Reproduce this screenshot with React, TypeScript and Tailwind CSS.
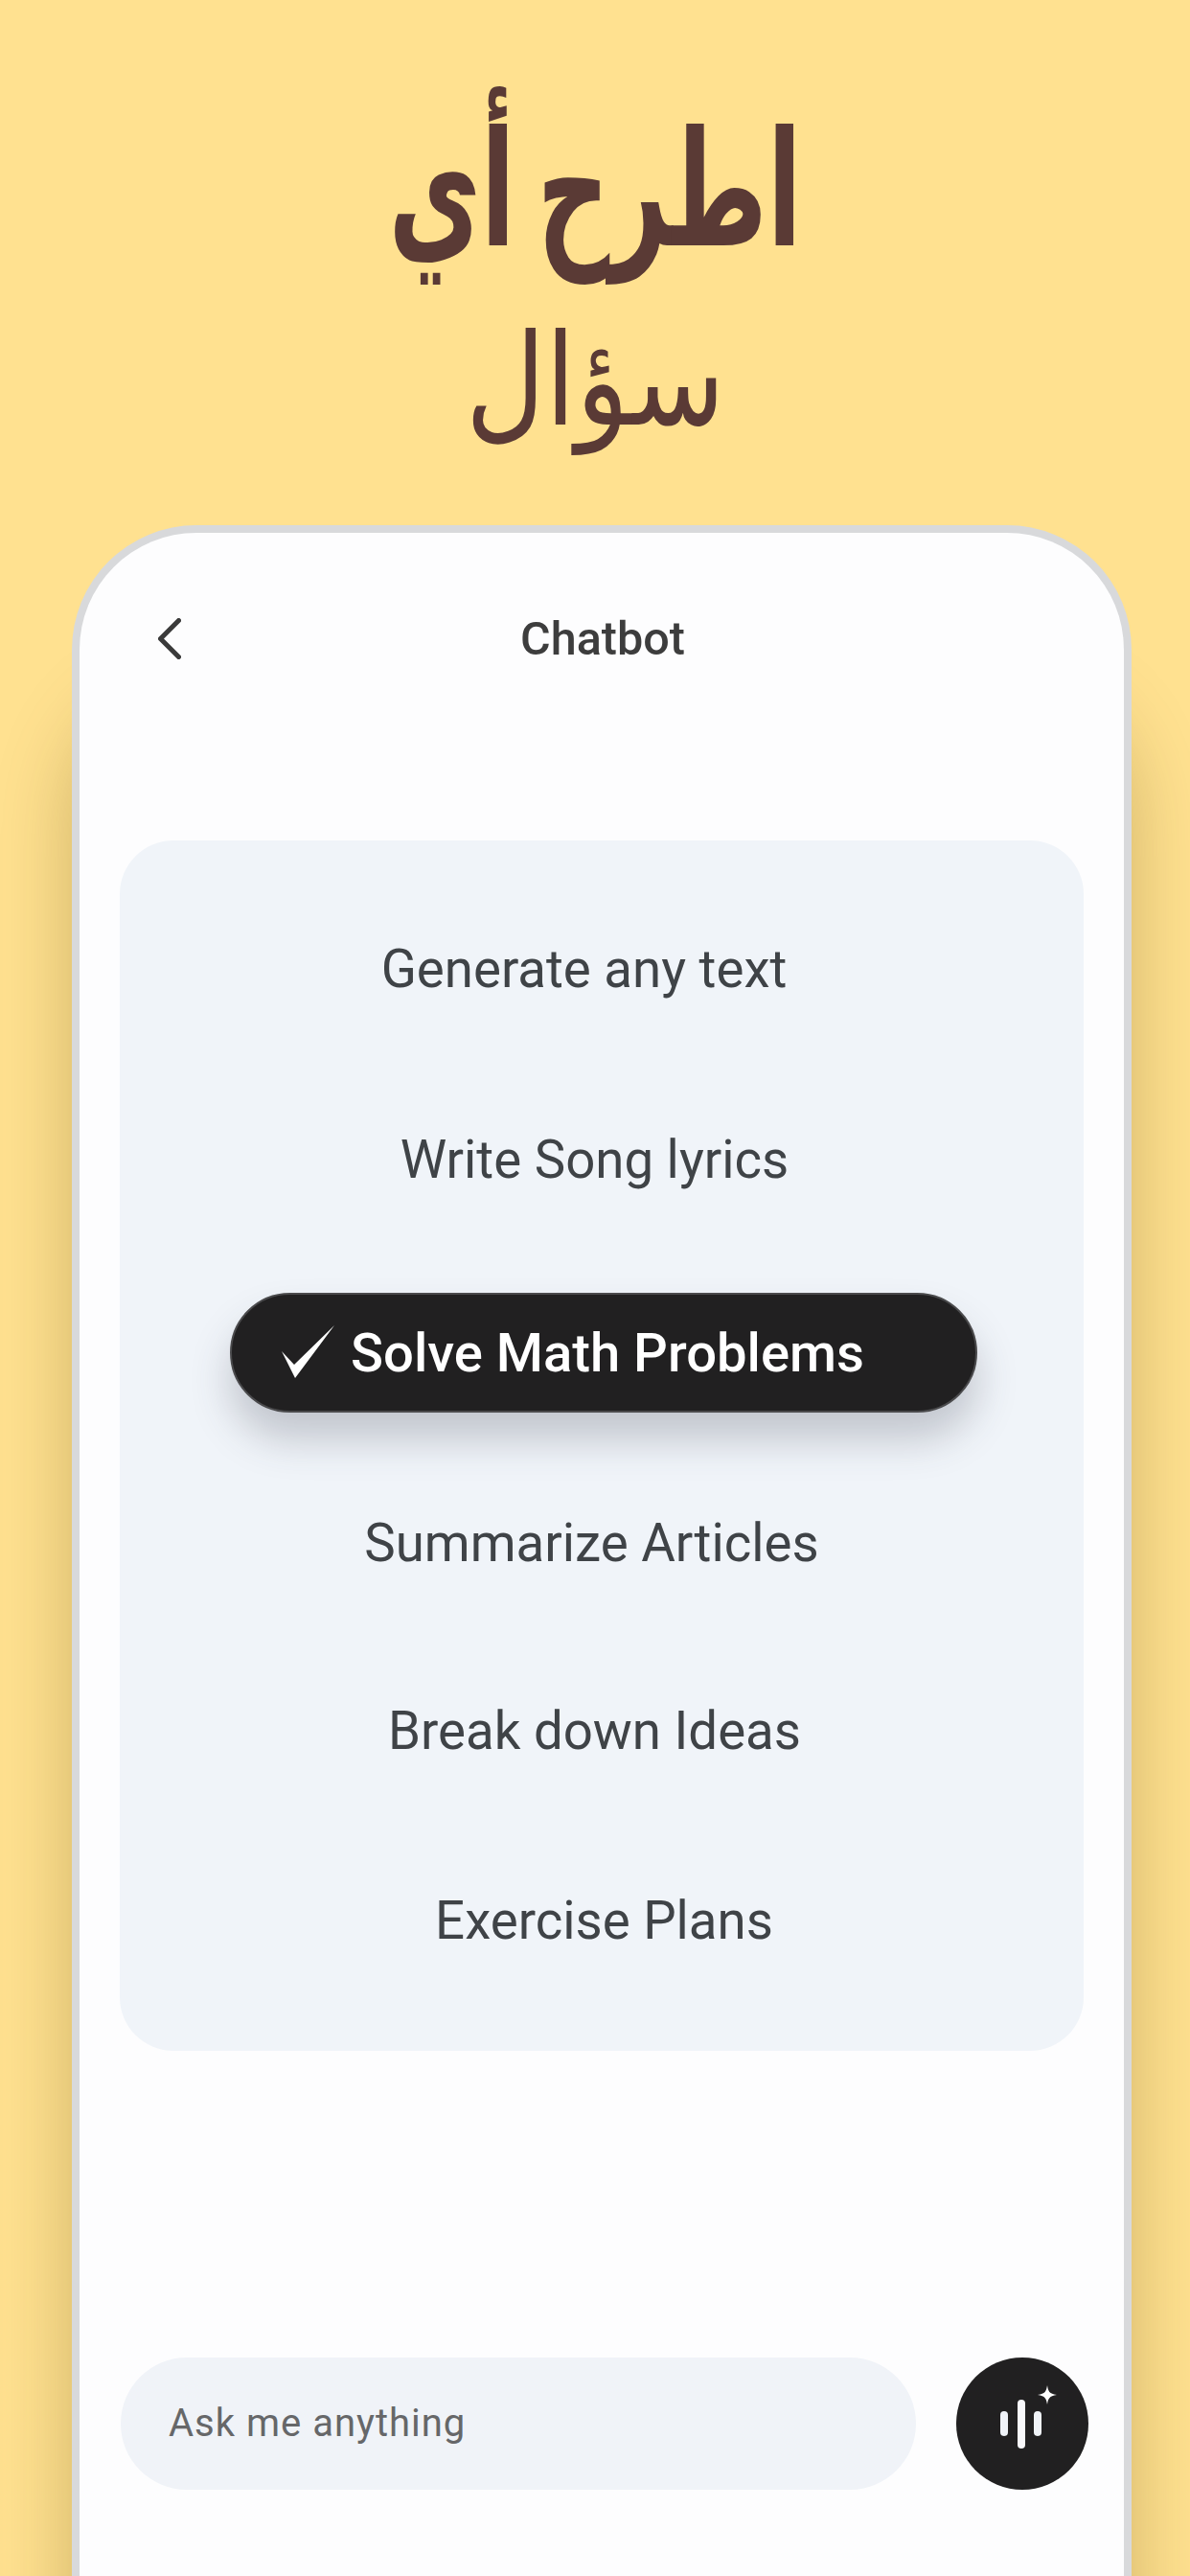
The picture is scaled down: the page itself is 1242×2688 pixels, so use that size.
export default function App() {
  const rows = [
    { t: "Generate any text", c: "h-[198px] pr-[37px]" },
    { t: "Write Song lyrics", c: "h-[200px] pr-[15px]" },
    { t: "Summarize Articles", c: "h-[195px] pr-[21px]" },
    { t: "Break down Ideas", c: "h-[198px] pr-[15px]" },
    { t: "Exercise Plans", c: "h-[197px] pl-[5px]" },
  ];
  const Row = ({ r }: { r: { t: string; c: string } }) => (
    <div className={`flex items-center justify-center pt-[2px] text-[54.6px] text-[#3f4347] ${r.c}`}>{r.t}</div>
  );
  return (
    <div className="h-[2688px] w-[1242px] overflow-hidden bg-[#ffe190] font-['Roboto',sans-serif]">
      <div dir="rtl" className="flex h-[548px] flex-col items-center font-['DejaVu_Sans_Condensed','DejaVu_Sans',sans-serif] text-[#5a3a35]">
        <div className="mt-[78px] h-[234px] scale-x-[0.7] text-[167px] font-bold leading-[240px] [word-spacing:-20px]">اطرح أي</div>
        <div className="h-[170px] scale-x-[0.96] text-[133px] font-normal leading-[170px]">سؤال</div>
      </div>
      <div className="ml-[75px] h-[2140px] w-[1106px] rounded-t-[130px] border-8 border-b-0 border-[#d8d9db] bg-[#fdfdfe] shadow-[0_170px_80px_rgba(110,85,20,0.32)]">
        <div className="flex h-[220px] items-center px-[82px]">
          <svg className="h-[43px] w-[24px]" viewBox="0 0 24 43" fill="none" stroke="#3a3a3a" strokeWidth="5" strokeLinecap="round" strokeLinejoin="round">
            <path d="M21.5 2.5 L2.5 21.5 L21.5 40.5" />
          </svg>
          <div className="flex-1 pl-[2px] pt-[2px] text-center text-[48.5px] font-medium text-[#3d3d3d]">Chatbot</div>
          <div className="w-[24px]" />
        </div>
        <div className="mx-[42px] mt-[101px] h-[1263px] rounded-[56px] bg-[#f0f4f9] pt-[35px]">
          <Row r={rows[0]} />
          <Row r={rows[1]} />
          <div className="flex h-[202px] items-center justify-center pl-[4px]">
            <div className="flex h-[125px] w-[780px] items-center rounded-full border-2 border-[#4a4a4c] bg-[#212021] pl-[52px] shadow-[0_28px_40px_rgba(60,65,80,0.25)]">
              <svg className="h-[56px] w-[56px] shrink-0" viewBox="0 0 56 56" fill="#ffffff">
                <polygon points="0,27 13,41 55,0 14,55" />
              </svg>
              <span className="ml-[16px] pt-[2px] text-[56.2px] font-medium text-white">Solve Math Problems</span>
            </div>
          </div>
          <Row r={rows[2]} />
          <Row r={rows[3]} />
          <Row r={rows[4]} />
        </div>
        <div className="ml-[43px] mt-[320px] flex items-center gap-[42px]">
          <div className="flex h-[138px] w-[830px] items-center rounded-full bg-[#f0f3f8] pl-[50px] text-[40px] tracking-[1px] text-[#666769]">Ask me anything</div>
          <div className="flex h-[138px] w-[138px] items-center justify-center rounded-full bg-[#212021]">
            <svg className="h-[72px] w-[72px] overflow-visible" viewBox="0 0 72 72">
              <rect x="13" y="23" width="8" height="26" rx="4" fill="#f0f3f8" />
              <rect x="31" y="11" width="8" height="51" rx="4" fill="#f8f8fb" />
              <rect x="48" y="23" width="8" height="26" rx="4" fill="#f0f3f8" />
              <path d="M62 -4 C63 2 64 5 72 6 C64 7 63 10 62 16 C61 10 60 7 52 6 C60 5 61 2 62 -4 Z" fill="#ffffff" />
            </svg>
          </div>
        </div>
      </div>
    </div>
  );
}
